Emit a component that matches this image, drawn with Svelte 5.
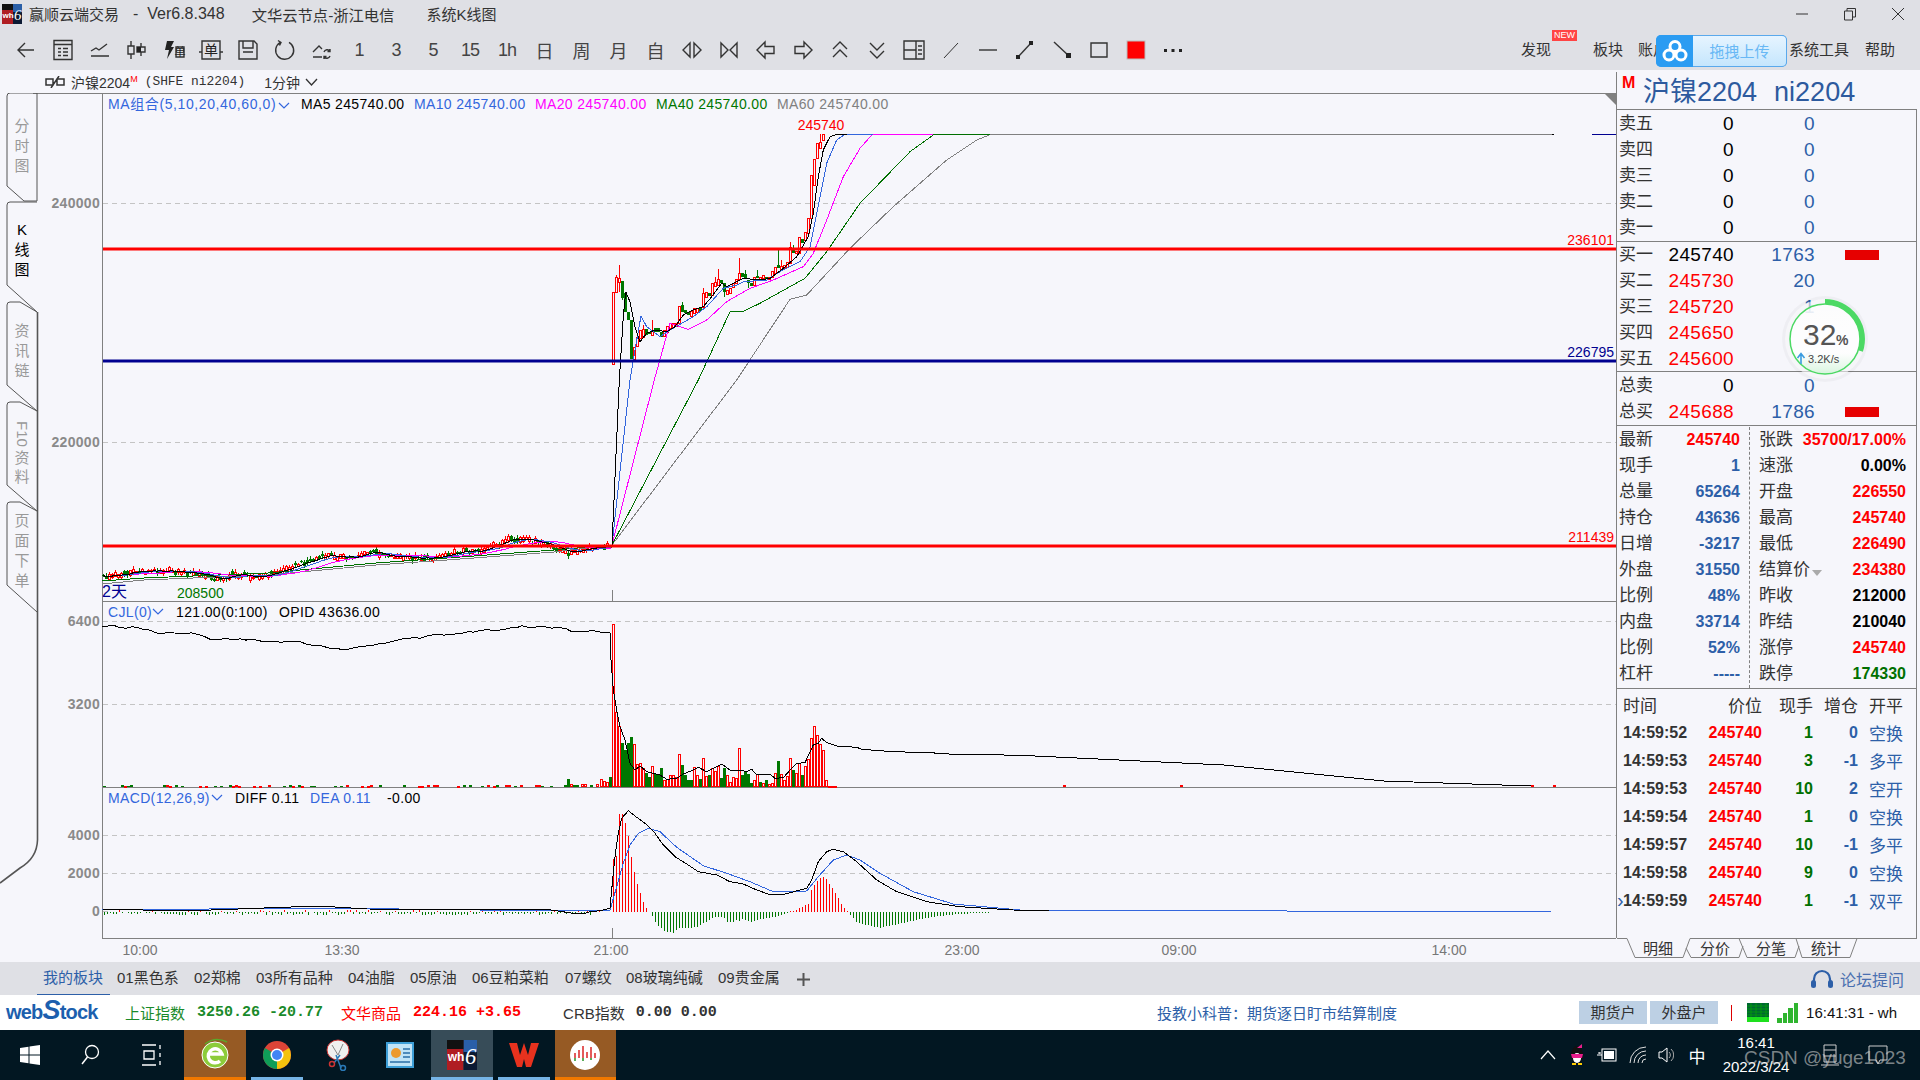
<script>
  // helpers: zoomed crop px -> screen coordinates
  const zx = (p) => 560 + p / 3;
  const zvy = (p) => 600 + p / 3;
  const kvy = (p) => 120 + p / 3;
  const fmt = (pts) => pts.map((p) => p[0].toFixed(1) + ',' + p[1].toFixed(1)).join(' ');
  const noise = (i, s = 1) => {
    const v = Math.sin(i * 12.9898 * s + s * 78.233) * 43758.5453;
    return v - Math.floor(v);
  };
  const lerp = (pts, x) => {
    for (let i = 1; i < pts.length; i++) {
      if (x <= pts[i][0]) {
        const [x0, y0] = pts[i - 1];
        const [x1, y1] = pts[i];
        return y0 + ((y1 - y0) * (x - x0)) / (x1 - x0);
      }
    }
    return pts[pts.length - 1][1];
  };
  const kz = (arr) => arr.map(([a, b]) => [560 + a / 3, kvy(b)]);
  const vz = (arr) => arr.map(([a, b]) => [zx(a), zvy(b)]);
  const wiggle = (pts, amp, s) => {
    const out = [];
    for (let i = 0, x = pts[0][0]; x <= pts[pts.length - 1][0]; i++, x += 6) {
      out.push([x, lerp(pts, x) + (noise(i, s) - 0.5) * amp]);
    }
    return out;
  };

  // ---- K pane ----
  const trend = [[102,577],[133,572],[165,570],[204,575],[219,580],[233,574],[261,577],[276,572],[304,562],[329,555],[347,558],[372,552],[397,557],[429,558],[461,551],[483,550],[508,540],[526,540],[547,545],[569,553],[597,547],[611,545]];
  const leftK = [];
  for (let i = 0, x = 103; x < 611; i++, x += 3) {
    const mid = lerp(trend, x) + (noise(i) - 0.5) * 4;
    const body = 1 + noise(i, 2) * 4;
    leftK.push({
      x,
      top: Math.round(mid - body / 2),
      bot: Math.round(mid + body / 2),
      hi: Math.round(mid - body / 2 - noise(i, 3) * 3),
      lo: Math.round(mid + body / 2 + noise(i, 4) * 3),
      up: noise(i, 5) > 0.42,
      mid
    });
  }
  const sma = (n) => leftK.map((k, i) => {
    const s = leftK.slice(Math.max(0, i - n + 1), i + 1);
    return [k.x, s.reduce((a, b) => a + b.mid, 0) / s.length];
  });
  // r/g body top, bottom, optional high/low (crop px)
  const rawK = 'r515,733 r470,515,465 r475,485,435,515 g483,535,483,540 g520,575 g575,600 g600,716 r680,716 r650,678,640 r630,655 r628,650,615 g628,645 g635,642 r630,645,600 g625,635 g625,637 g635,650 r630,648 r618,635 r610,625 r610,620 r610,618 r558,610 g555,575,545 g570,580 g575,585 r572,588 r565,580 r563,575 g563,573 r518,562,505 r515,530 g518,527 r490,525 r485,498,470 r478,495,448 g480,490 g488,515,488,530 r510,522 r505,518 r488,502 r478,490 r460,478,415 g458,470 g462,475,450 g480,490,480,505 g490,498 r470,495 g468,473,450 r470,478 r465,475 g470,476 r470,478 r452,470 r442,460 g435,445,390 r437,450,420 r435,445 r425,440 r382,430,365 g385,398,375 r392,400 r350,398 g358,370 r335,360 r295,340 r165,295 r118,195 r68,115 r65,85,43 r43,60';
  const rightK = rawK.split(' ').map((s, i) => {
    const [a, b, c, d] = s.slice(1).split(',').map(Number);
    return {
      x: Math.round(zx(160 + i * 9)),
      top: Math.round(kvy(a)),
      bot: Math.round(kvy(b)),
      hi: Math.round(kvy(c ?? a)),
      lo: Math.round(kvy(d ?? b)),
      up: s[0] === 'r'
    };
  });
  const candles = [...leftK, ...rightK];

  const maJoin = { x: 612, y: 545 };
  const ma5 = [...sma(5), [maJoin.x, maJoin.y], ...kz([[178,780],[190,590],[197,515],[210,545],[225,620],[240,665],[260,640],[285,630],[320,635],[345,620],[370,585],[400,570],[430,560],[455,530],[485,490],[500,500],[530,485],[550,475],[600,480],[630,475],[670,445],[710,410],[745,350],[760,280],[775,170],[790,90],[810,50],[830,43],[860,43]])];
  const ma10 = [...sma(10), [maJoin.x, maJoin.y], ...kz([[210,780],[225,690],[243,588],[260,620],[300,650],[330,630],[400,590],[440,560],[490,505],[530,495],[550,485],[620,480],[660,455],[720,425],[750,380],[770,280],[800,130],[830,60],[855,43],[940,43]])];
  const ma20 = [...sma(20), [maJoin.x, maJoin.y], ...kz([[283,780],[330,610],[385,628],[440,600],[500,545],[570,505],[640,480],[730,440],[760,400],[800,300],[850,170],[900,85],[935,45],[945,43],[1120,43]])];
  const ma40 = [[102,581],[144,578],[268,573],[376,563],[447,558],[554,550],[maJoin.x, maJoin.y], ...kz([[415,780],[510,575],[550,574],[600,550],[735,475],[800,395],[900,250],[1050,95],[1120,45],[1135,43],[1290,43]])];
  const ma60 = [[102,584],[144,580],[268,575],[376,565],[447,560],[554,552],[maJoin.x, maJoin.y], ...kz([[530,780],[690,538],[740,525],[870,385],[1000,260],[1160,120],[1250,60],[1290,44]]), [1554,134]];
  const maLines = [
    { pts: ma60, c: '#808080' },
    { pts: ma40, c: '#007000' },
    { pts: ma20, c: '#ff00ff' },
    { pts: ma10, c: '#3366dd' },
    { pts: ma5, c: '#000' }
  ];

  // ---- volume pane ----
  const rawVol = 'g530 r72 r335 r378 g430 g450 g430 g410 r432 r492 r488 r505 g518 g530 r498 g522 g522 g505 r540 r537 r525 r525 r530 r462 g495 g525 g540 g540 r502 r525 g537 r475 r528 g525 r505 r512 r498 g533 g505 r526 r546 r530 r535 r445 g525 g515 g522 g548 r540 r523 g546 r550 g540 r552 r548 r520 g483 r522 r540 r527 r475 g510 r520 r490 g525 r498 r478 r415 r377 r405 r432 r450 r540 r558 r558 r558';
  const vol = [];
  for (let i = 0, x = 104; x < 558; i++, x += 3) {
    if (noise(i, 6) > 0.72) vol.push({ x, top: 787 - (1 + Math.round(noise(i, 7))), up: noise(i, 8) > 0.5 });
  }
  [[15,555,0],[24,537,0],[33,552,1],[42,555,0],[51,555,0],[67,552,1],[76,552,1],[92,555,0],[110,552,1],[124,538,1],[133,543,1],[142,547,1]].forEach(([p, t, u]) => vol.push({ x: Math.round(zx(p)), top: Math.round(zvy(t)), up: !!u }));
  rawVol.split(' ').forEach((s, i) => vol.push({ x: Math.round(zx(150 + i * 9)), top: Math.round(zvy(+s.slice(1))), up: s[0] === 'r' }));
  const blips = [1063, 1180, 1531, 1553];

  const oiLeft = wiggle([[102,626],[135,628],[160,633],[195,632],[205,638],[250,640],[300,642],[340,650],[370,646],[400,640],[430,636],[470,632],[510,628],[525,626],[560,628]], 2.4, 11);
  const oiLine = [...oiLeft,
    ...vz([[20,87],[35,95],[60,95],[100,92],[130,98],[150,98],[153,180],[160,270],[170,330],[180,380],[195,420],[210,490],[225,510],[240,498],[260,515],[300,525],[320,538],[350,535],[370,522],[400,510],[415,502],[440,515],[460,505],[485,492],[510,510],[540,510],[560,515],[575,508],[590,525],[630,523],[645,535],[670,533],[695,505],[710,490],[735,488],[750,455],[760,435],[775,430],[785,415],[800,428],[830,438],[890,442],[905,448],[1000,455],[1110,458],[1180,463],[1280,464],[1380,466]]),
    [1224,765],[1384,781],[1531,786]];

  // ---- MACD pane ----
  const diff = [[102,909],[184,911],[318,906],[367,909],[551,910],
    ...vz([[40,940],[75,940],[90,935],[120,932],[150,925],[157,850],[165,770],[175,700],[185,655],[205,632],[230,652],[255,670],[285,700],[310,735],[345,770],[385,795],[415,815],[470,825],[510,845],[550,852],[590,870],[625,882],[675,882],[740,865],[755,840],[775,785],[800,755],[820,748],[850,755],[890,785],[950,840],[1010,875],[1100,905],[1200,920],[1360,930]]), [1049,911]];
  const dea = [[102,910],[318,908],[560,911],
    ...vz([[150,930],[170,860],[190,790],[210,735],[235,700],[265,685],[300,695],[350,742],[430,797],[500,820],[570,845],[640,875],[740,873],[775,830],[820,780],[860,765],[900,780],[960,820],[1060,875],[1180,912],[1380,930]]), [1551,912]];
  const histTop = [778,768,642,642,670,708,770,815,852,880,905,923,937,948,965,978,985,993,995,996,998,990,985,985,985,985,985,982,980,975,970,965,960,955,950,950,950,955,965,965,965,960,962,958,960,962,965,962,960,958,958,955,955,952,950,948,945,942,938,934,932,930,925,922,915,912,870,855,842,835,830,838,852,865,880,895,912,925,934];
  const hist = [];
  for (let i = 0, x = 104; x < 600; i++, x += 3) {
    const h = noise(i, 9) * 2;
    const up = x > 590 || noise(i, 10) > 0.75;
    hist.push({ x, y1: 912, y2: up ? 912 - h : 912 + h + 1, c: up ? '#f00' : '#070' });
  }
  histTop.forEach((t, i) => {
    const y = zvy(t);
    hist.push({ x: Math.round(zx(160 + i * 9)), y1: 912, y2: y, c: y < 912 ? '#f00' : '#070' });
  });
  const tailPts = [[871,945],[880,955],[889,965],[898,970],[907,973],[960,983],[1000,975],[1060,962],[1120,950],[1200,942],[1300,937],[1360,935]];
  for (let p = 871; p < 1365; p += 9) {
    hist.push({ x: Math.round(zx(p)), y1: 912, y2: zvy(lerp(tailPts, p)), c: '#070' });
  }

  const grid = [203, 442, 621, 704, 835, 873];
  const axis = [['240000', 203], ['220000', 442], ['6400', 621], ['3200', 704], ['4000', 835], ['2000', 873], ['0', 911]];
  const levels = [
    { y: 249, c: '#f00', t: '236101' },
    { y: 361, c: '#000090', t: '226795' },
    { y: 546, c: '#f00', t: '211439' }
  ];
  const times = [['10:00', 140], ['13:30', 342], ['21:00', 611], ['23:00', 962], ['09:00', 1179], ['14:00', 1449]];

  const sideTabs = [
    { d: 'M37 93H10q-3 0-3 3V186L24 201H37V93', lines: [['分', 131], ['时', 151], ['图', 171]] },
    { d: 'M7 285V205q0-3 3-3H37M7 285L37 312', active: true, lines: [['K', 235], ['线', 255], ['图', 275]] },
    { d: 'M37 312L20 302H10q-3 0-3 3V385L37 411', lines: [['资', 336], ['讯', 356], ['链', 376]] },
    { d: 'M37 411L20 402H10q-3 0-3 3V485L37 511', lines: [['资', 463], ['料', 482]], f10: true },
    { d: 'M37 511L20 502H10q-3 0-3 3V585L37 612', lines: [['页', 526], ['面', 546], ['下', 566], ['单', 586]] }
  ];

  // ---- toolbar ----
  const tools = [
    { d: 'M20 12H4M11 5L4 12L11 19' },
    { d: 'M3 2.5H21V21.5H3ZM3 6.5H21M7 10.5H10M12 10.5H17M7 14H10M12 14H17M7 17.5H10M12 17.5H17' },
    { d: 'M3 13L8 10L11 12L19 6M3 18H21' },
    { d: 'M3 8H9V16H3ZM6 3V8M6 16V21M12 9H20V14H12ZM16 5V9M16 14V18', fill: 'M12 9H16V14H12Z' },
    { d: 'M14 9H22V19H14Z', fill: 'M5 3H12L9 9H12L5 21L7 12H3Z', unit: true },
    { d: 'M3 3H21V21H3ZM0 14H3M21 14H24', label: '单' },
    { d: 'M3 3H18L21 6V21H3ZM7 3V10H17V3M7 14H17' },
    { d: 'M16 4.4A9 9 0 1 1 7 4.6M5 2.5L8 4.5L6.5 7.5' },
    { d: 'M3 14L9 8L12 11M3 19H12M14 14A3.5 3.5 0 0 1 20 13M20 18A3.5 3.5 0 0 1 14 19M20 11V13.5H17.5M14 21V18.5H16.5' },
    { t: '1' }, { t: '3' }, { t: '5' }, { t: '15' }, { t: '1h' }, { t: '日' }, { t: '周' }, { t: '月' }, { t: '自' },
    { d: 'M10 5L3 12L10 19ZM14 5L21 12L14 19Z' },
    { d: 'M4 5L11 12L4 19ZM20 5L13 12L20 19Z' },
    { d: 'M11 4L3 12L11 20V15.5H20V8.5H11Z' },
    { d: 'M13 4L21 12L13 20V15.5H4V8.5H13Z' },
    { d: 'M5 11L12 4L19 11M5 19L12 12L19 19' },
    { d: 'M5 5L12 12L19 5M5 13L12 20L19 13' },
    { d: 'M2 3H22V21H2ZM14 3V21M2 12H14M16 8H20M16 12H20M16 16H20' },
    { d: 'M5 20L19 5', thin: true },
    { d: 'M3 12H21' },
    { d: 'M5 19L18 5', fill: 'M3 17H7V21H3ZM16 3H20V7H16Z' },
    { d: 'M4 4L19 18', fill: 'M16 15H21V20H16Z' },
    { d: 'M4 5H20V19H4Z' },
    { square: true },
    { fill: 'M3 11H6V14H3ZM10.5 11H13.5V14H10.5ZM18 11H21V14H18Z' }
  ];

  // ---- quote panel ----
  const sells = ['卖五', '卖四', '卖三', '卖二', '卖一'];
  const buys = [
    ['买一', '245740', '1763', true, 'blk'],
    ['买二', '245730', '20', false, 'red'],
    ['买三', '245720', '1', false, 'red'],
    ['买四', '245650', '1', false, 'red'],
    ['买五', '245600', '1', false, 'red']
  ];
  const statsL = [['最新', '245740', 'red'], ['现手', '1', 'blue'], ['总量', '65264', 'blue'], ['持仓', '43636', 'blue'], ['日增', '-3217', 'blue'], ['外盘', '31550', 'blue'], ['比例', '48%', 'blue'], ['内盘', '33714', 'blue'], ['比例', '52%', 'blue'], ['杠杆', '-----', 'blue']];
  const statsR = [['张跌', '35700/17.00%', 'red'], ['速涨', '0.00%', 'blk'], ['开盘', '226550', 'red'], ['最高', '245740', 'red'], ['最低', '226490', 'red'], ['结算价', '234380', 'red', true], ['昨收', '212000', 'blk'], ['昨结', '210040', 'blk'], ['涨停', '245740', 'red'], ['跌停', '174330', 'grn']];
  const trades = [['14:59:52', '1', '0', '空换'], ['14:59:53', '3', '-1', '多平'], ['14:59:53', '10', '2', '空开'], ['14:59:54', '1', '0', '空换'], ['14:59:57', '10', '-1', '多平'], ['14:59:58', '9', '0', '空换'], ['14:59:59', '1', '-1', '双平']];

  const blocks = [['我的板块', 37, true], ['01黑色系', 117], ['02郑棉', 194], ['03所有品种', 256], ['04油脂', 348], ['05原油', 410], ['06豆粕菜粕', 472], ['07螺纹', 565], ['08玻璃纯碱', 626], ['09贵金属', 718]];
  const signal = [5, 10, 15, 20];
</script>

{#snippet wh6(s)}
  <svg class="wh6" width={s} height={s} viewBox="0 0 20 20">
    <rect width="11" height="20" fill="#b01d22" />
    <rect x="11" width="9" height="20" fill="#0c1a33" />
    <rect x="11" width="9" height="8" fill="#2a5fa8" />
    <rect width="11" height="6" fill="#111" />
    <text x="0.5" y="14" font-size="8" font-weight="700" fill="#fff" font-family="Liberation Sans">wh</text>
    <text x="12" y="16" font-size="15" font-style="italic" fill="#fff" font-family="Liberation Serif">6</text>
  </svg>
{/snippet}

<div class="app">
  <header class="top">
    <div class="titlebar">
      {@render wh6(20)}
      <span class="t-app">赢顺云端交易</span>
      <span class="t-ver">-&nbsp; Ver6.8.348</span>
      <span class="t-node">文华云节点-浙江电信</span>
      <span class="t-view">系统K线图</span>
      <div class="winctl">
        <svg width="14" height="14" viewBox="0 0 14 14"><path d="M1 7H13" /></svg>
        <svg width="14" height="14" viewBox="0 0 14 14"><path d="M1.5 4H9.5V13H1.5ZM4 4V1.5H12.5V10H9.5" /></svg>
        <svg width="14" height="14" viewBox="0 0 14 14"><path d="M1 1L13 13M13 1L1 13" /></svg>
      </div>
    </div>
    <div class="toolbar">
      {#each tools as tool}
        <div class="tool">
          {#if tool.t}
            <span class="tool-t">{tool.t}</span>
          {:else if tool.square}
            <svg width="24" height="24" viewBox="0 0 24 24"><rect x="3" y="3" width="18" height="18" fill="#f00" stroke="#bbb" /></svg>
          {:else}
            <svg width="24" height="24" viewBox="0 0 24 24">
              {#if tool.d}<path d={tool.d} fill="none" stroke="#333" stroke-width={tool.thin ? 1 : 1.4} />{/if}
              {#if tool.fill}<path d={tool.fill} fill="#222" />{/if}
              {#if tool.label}<text x="12" y="17" text-anchor="middle" font-size="14" fill="#222" font-family="Noto Sans CJK SC">{tool.label}</text>{/if}
              {#if tool.unit}<text x="18" y="18" text-anchor="middle" font-size="11" fill="#222" font-family="Noto Sans CJK SC">单</text>{/if}
            </svg>
          {/if}
        </div>
      {/each}
      <nav class="menu">
        <span class="m-find">发现<i class="new">NEW</i></span>
        <span class="m-block">板块</span>
        <span class="m-acct">账户</span>
        <span class="m-sys">系统工具</span>
        <span class="m-help">帮助</span>
      </nav>
    </div>
    <div class="upload">
      <div class="cloud">
        <svg width="26" height="22" viewBox="0 0 26 22">
          <circle cx="13" cy="6.5" r="5" fill="none" stroke="#fff" stroke-width="3" />
          <circle cx="7" cy="15" r="5" fill="none" stroke="#fff" stroke-width="3" />
          <circle cx="19" cy="15" r="5" fill="none" stroke="#fff" stroke-width="3" />
        </svg>
      </div>
      <div class="drag">拖拽上传</div>
    </div>
  </header>

  <main class="main">
    <section class="chart-col">
      <div class="chart-head">
        <svg width="20" height="12" viewBox="0 0 20 12">
          <path d="M1 3H8V9H1ZM12 3H19V9H12ZM6 12L14 0" fill="none" stroke="#333" stroke-width="1.5" />
        </svg>
        <span class="h-name">沪镍2204<sup>M</sup></span>
        <span class="h-code">(SHFE ni2204)</span>
        <span class="h-per">1分钟</span>
        <svg width="13" height="8" viewBox="0 0 13 8"><path d="M1 1L6.5 7L12 1" fill="none" stroke="#333" stroke-width="1.3" /></svg>
      </div>

      <svg class="chart" width="1616" height="869" viewBox="0 93 1616 869">
        <!-- frame -->
        <path d="M33 93.5H1616M102.5 93V938M102 601.5H1616M102 787.5H1616M102 938.5H1616" stroke="#808080" fill="none" />
        <path d="M1605 94H1616V105Z" fill="#808080" />

        <!-- side tabs -->
        <path d="M37.5 312V840Q37 858 20 868L0 883" fill="none" stroke="#555" stroke-width="1.6" />
        {#each sideTabs as tab}
          <path d={tab.d} fill={tab.active ? '#f6f6fb' : 'none'} stroke="#555" />
          {#if tab.f10}
            <text class="side" x="0" y="0" transform="translate(17 421) rotate(90)" fill="#999">F10</text>
          {/if}
          {#each tab.lines as [ch, y]}
            <text class="side" x="22" {y} text-anchor="middle" fill={tab.active ? '#000' : '#999'}>{ch}</text>
          {/each}
        {/each}

        <!-- axes and grid -->
        {#each grid as y}
          <path d="M103 {y + 0.5}H1616" stroke="#c4c4c4" stroke-dasharray="5 4" shape-rendering="crispEdges" />
        {/each}
        <path d="M103 911.5H108" stroke="#c4c4c4" />
        {#each axis as [t, y]}
          <text class="axis" x="100" y={y + 5} text-anchor="end">{t}</text>
        {/each}
        <path d="M612.5 590V601M612.5 928V938" stroke="#808080" shape-rendering="crispEdges" />

        <!-- candles -->
        <g shape-rendering="crispEdges">
          {#each candles as k}
            <path d="M{k.x + 0.5} {k.hi}V{k.lo}" stroke={k.up ? '#f00' : '#070'} />
            {#if k.up}
              <rect x={k.x - 0.5} y={k.top + 0.5} width="2" height={Math.max(1, k.bot - k.top)} fill="#f6f6fb" stroke="#f00" />
            {:else}
              <rect x={k.x - 1} y={k.top} width="3" height={Math.max(1, k.bot - k.top)} fill="#070" />
            {/if}
          {/each}
          {#each maLines as line}
            <polyline points={fmt(line.pts)} fill="none" stroke={line.c} />
          {/each}
          <path d="M1592 134.5H1616" stroke="#000090" />
          <path d="M1552 134.5H1554" stroke="#000" />
        </g>

        <!-- horizontal levels -->
        {#each levels as l}
          <rect x="103" y={l.y - 1.5} width="1513" height="3" fill={l.c} />
          <text class="lbl" x="1614" y={l.y - 4} text-anchor="end" fill={l.c}>{l.t}</text>
        {/each}
        <text class="lbl" x="821" y="130" text-anchor="middle" fill="#f00">245740</text>
        <text class="lbl big" x="102" y="597" fill="#000090">2天</text>
        <text class="lbl" x="177" y="598" fill="#070">208500</text>

        <!-- legends -->
        <text class="lg wide" x="108" y="109" fill="#3366dd">MA组合(5,10,20,40,60,0)</text>
        <path d="M279 103L284 108L289 103" fill="none" stroke="#3366dd" stroke-width="1.2" />
        <text class="lg" x="301" y="109" fill="#000">MA5 245740.00</text>
        <text class="lg" x="414" y="109" fill="#3366dd">MA10 245740.00</text>
        <text class="lg" x="535" y="109" fill="#f0f">MA20 245740.00</text>
        <text class="lg" x="656" y="109" fill="#070">MA40 245740.00</text>
        <text class="lg" x="777" y="109" fill="#808080">MA60 245740.00</text>

        <text class="lg" x="108" y="617" fill="#3366dd">CJL(0)</text>
        <path d="M153 609L158 614L163 609" fill="none" stroke="#3366dd" stroke-width="1.2" />
        <text class="lg" x="176" y="617" fill="#000">121.00(0:100)</text>
        <text class="lg" x="279" y="617" fill="#000">OPID 43636.00</text>

        <text class="lg" x="108" y="803" fill="#3366dd">MACD(12,26,9)</text>
        <path d="M212 795L217 800L222 795" fill="none" stroke="#3366dd" stroke-width="1.2" />
        <text class="lg" x="235" y="803" fill="#000">DIFF 0.11</text>
        <text class="lg" x="310" y="803" fill="#3366dd">DEA 0.11</text>
        <text class="lg" x="387" y="803" fill="#000">-0.00</text>

        <!-- volume -->
        <g shape-rendering="crispEdges">
          {#each vol as v}
            {#if v.up}
              <rect x={v.x - 0.5} y={v.top + 0.5} width="2" height={Math.max(1, 786 - v.top)} fill="#f6f6fb" stroke="#f00" />
            {:else}
              <rect x={v.x - 1} y={v.top} width="3" height={787 - v.top} fill="#070" />
            {/if}
          {/each}
          {#each blips as b}
            <rect x={b} y="785" width="3" height="2" fill="#f00" />
          {/each}
          <polyline points={fmt(oiLine)} fill="none" stroke="#000" />
          <!-- macd -->
          {#each hist as h}
            <path d="M{h.x + 0.5} {h.y1}V{h.y2}" stroke={h.c} />
          {/each}
          <polyline points={fmt(dea)} fill="none" stroke="#3366dd" />
          <polyline points={fmt(diff)} fill="none" stroke="#000" />
        </g>

        {#each times as [t, x]}
          <text class="time" {x} y="955" text-anchor="middle">{t}</text>
        {/each}
      </svg>
    </section>

    <aside class="quote">
      <div class="q-title">
        <b class="q-m">M</b>
        <span class="q-name">沪镍2204</span>
        <span class="q-code">ni2204</span>
      </div>
      <div class="q-body">
        <div class="book b-sell">
          {#each sells as s}
            <div class="book-row"><span class="lab">{s}</span><span class="n blk">0</span><span class="n blue">0</span></div>
          {/each}
        </div>
        <div class="book b-buy">
          {#each buys as b}
            <div class="book-row">
              <span class="lab">{b[0]}</span><span class="n {b[4]}">{b[1]}</span><span class="n blue">{b[2]}</span>
              {#if b[3]}<i class="bar"></i>{/if}
            </div>
          {/each}
        </div>
        <div class="book b-total">
          <div class="book-row"><span class="lab">总卖</span><span class="n blk">0</span><span class="n blue">0</span></div>
          <div class="book-row"><span class="lab">总买</span><span class="n red">245688</span><span class="n blue">1786</span><i class="bar"></i></div>
        </div>
        <div class="stats">
          <div class="s-col s-left">
            {#each statsL as s}
              <div class="s-row"><span class="lab">{s[0]}</span><b class={s[2]}>{s[1]}</b></div>
            {/each}
          </div>
          <div class="s-col s-right">
            {#each statsR as s}
              <div class="s-row">
                <span class="lab">{s[0]}{#if s[3]}<i class="caret"></i>{/if}</span><b class={s[2]}>{s[1]}</b>
              </div>
            {/each}
          </div>
        </div>
        <div class="trades">
          <div class="tr-row tr-head"><span>时间</span><span class="r">价位</span><span class="r">现手</span><span class="r">增仓</span><span>开平</span></div>
          {#each trades as t, i}
            <div class="tr-row">
              {#if i === trades.length - 1}<i class="cur">›</i>{/if}
              <b class="tm">{t[0]}</b><b class="r red">245740</b><b class="r grn">{t[1]}</b><b class="r blue">{t[2]}</b><span class="kp">{t[3]}</span>
            </div>
          {/each}
        </div>
      </div>
      <svg class="q-tabs" width="304" height="24" viewBox="1616 938 304 24">
        <path d="M1617 938.5H1627L1635 957.5H1683L1690 938.5H1917" fill="none" stroke="#808080" />
        <path d="M1686 948L1691 957.5H1739L1743 946M1739 938.5L1747 957.5H1795L1799 946M1796 938.5L1802 957.5H1850L1857 938.5" fill="none" stroke="#808080" />
        <text x="1658" y="954" text-anchor="middle">明细</text>
        <text x="1715" y="954" text-anchor="middle">分价</text>
        <text x="1771" y="954" text-anchor="middle">分笔</text>
        <text x="1826" y="954" text-anchor="middle">统计</text>
      </svg>

      <svg class="net" width="88" height="88" viewBox="0 0 88 88">
        <defs>
          <linearGradient id="ringfill" x1="0" y1="0" x2="0" y2="1">
            <stop offset="0" stop-color="#fff" stop-opacity=".7" />
            <stop offset="0.7" stop-color="#fff" stop-opacity=".85" />
            <stop offset="1" stop-color="#d8f5de" />
          </linearGradient>
        </defs>
        <circle cx="44" cy="44" r="43" fill="#000" opacity=".03" />
        <circle cx="44" cy="44" r="40" fill="#fbfbfd" opacity=".6" />
        <circle cx="44" cy="44" r="35" fill="url(#ringfill)" stroke="#4cd964" stroke-width="1.5" />
        <path d="M44 6.5A37.5 37.5 0 0 1 79.5 56" fill="none" stroke="#4cd964" stroke-width="5" />
        <text x="22" y="50" font-size="30" fill="#555" font-family="Liberation Sans">32</text>
        <text x="55" y="50" font-size="14" font-weight="700" fill="#555" font-family="Liberation Sans">%</text>
        <path d="M20 69V59M16.5 63L20 58.5L23.5 63" fill="none" stroke="#3a9be0" stroke-width="1.6" />
        <text x="27" y="68" font-size="11" fill="#444" font-family="Liberation Sans">3.2K/s</text>
      </svg>
    </aside>
  </main>

  <div class="blocks">
    {#each blocks as b}
      <span class="block" class:on={b[2]} style="left:{b[1]}px">{b[0]}</span>
    {/each}
    <svg class="plus" width="13" height="13" viewBox="0 0 13 13"><path d="M6.5 0V13M0 6.5H13" stroke="#555" stroke-width="2" /></svg>
    <div class="forum">
      <svg width="24" height="20" viewBox="0 0 24 20">
        <path d="M4 13V10A8 8 0 0 1 20 10V13" fill="none" stroke="#2d5fa8" stroke-width="2.2" />
        <rect x="1" y="11" width="5" height="8" rx="2.5" fill="#2d5fa8" />
        <rect x="18" y="11" width="5" height="8" rx="2.5" fill="#2d5fa8" />
      </svg>
      <span>论坛提问</span>
    </div>
  </div>

  <div class="status">
    <div class="wslogo"><span>web</span><em>S</em><span>tock</span></div>
    <span class="st-lab grn2" style="margin-left:35px">上证指数</span>
    <b class="st-num grn2" style="margin-left:12px">3250.26 -20.77</b>
    <span class="st-lab redc" style="margin-left:18px">文华商品</span>
    <b class="st-num redc" style="margin-left:12px">224.16 +3.65</b>
    <span class="st-lab" style="margin-left:42px">CRB指数</span>
    <b class="st-num" style="margin-left:11px">0.00 0.00</b>
    <span class="news">投教小科普：期货逐日盯市结算制度</span>
    <div class="st-right">
      <span class="st-btn">期货户</span>
      <span class="st-btn">外盘户</span>
      <i class="st-sep"></i>
      <svg width="22" height="19" viewBox="0 0 22 19">
        <rect width="22" height="19" fill="#063" />
        <path d="M0 3H22M0 6H22M0 9H22M0 12H22M4 0V14M9 0V14M14 0V14M19 0V14" stroke="#0a0" stroke-width=".7" />
        <rect y="14" width="22" height="5" fill="#1ee01e" />
      </svg>
      <div class="sig">
        {#each signal as h}<i style="height:{h}px"></i>{/each}
      </div>
      <span class="clock">16:41:31 - wh</span>
    </div>
  </div>

  <footer class="taskbar">
    <div class="sys s60">
      <svg width="20" height="20" viewBox="0 0 20 20"><path d="M0 3L8.5 1.8V9.5H0ZM9.5 1.6L20 0V9.5H9.5ZM0 10.5H8.5V18.2L0 17ZM9.5 10.5H20V20L9.5 18.4Z" fill="#fff" /></svg>
    </div>
    <div class="sys s60">
      <svg width="20" height="22" viewBox="0 0 20 22"><circle cx="12" cy="8" r="6.5" fill="none" stroke="#fff" stroke-width="1.3" /><path d="M7.5 13L2 20" stroke="#fff" stroke-width="1.5" /></svg>
    </div>
    <div class="sys s64">
      <svg width="20" height="22" viewBox="0 0 20 22"><path d="M0 1H14M0 21H14M2 7H12V15H2ZM18 1V5M18 9V13M18 17V21" fill="none" stroke="#fff" stroke-width="1.3" /></svg>
    </div>
    <div class="tile hot">
      <svg width="30" height="34" viewBox="0 0 30 34"><circle cx="15" cy="17" r="13" fill="#8ccc3a" stroke="#fff" stroke-width="1" /><path d="M8 16H22A7 7 0 1 0 20 23" fill="none" stroke="#fff" stroke-width="3.5" /><path d="M5 6Q15-2 27 4" fill="none" stroke="#5ba82a" stroke-width="1.5" /></svg>
    </div>
    <div class="tile run">
      <svg width="28" height="28" viewBox="0 0 28 28">
        <circle cx="14" cy="14" r="14" fill="#db4437" />
        <path d="M14 14L26.1 7A14 14 0 0 1 14 28Z" fill="#f4c20d" />
        <path d="M14 14L14 28A14 14 0 0 1 1.9 7Z" fill="#0f9d58" />
        <circle cx="14" cy="14" r="6.5" fill="#fff" /><circle cx="14" cy="14" r="5" fill="#4285f4" />
      </svg>
    </div>
    <div class="tile">
      <svg width="28" height="32" viewBox="0 0 28 32"><ellipse cx="14" cy="11" rx="11" ry="10" fill="#f0f0f0" stroke="#c33" /><path d="M8 6L14 16L19 5" stroke="#888" fill="none" /><path d="M12 16L17 29M16 16L10 24" stroke="#2a7ab8" stroke-width="1.5" /><circle cx="8" cy="25" r="2.5" fill="none" stroke="#c33" stroke-width="1.5" /><circle cx="19" cy="29" r="2.5" fill="none" stroke="#2a7ab8" stroke-width="1.5" /></svg>
    </div>
    <div class="tile">
      <svg width="28" height="26" viewBox="0 0 28 26"><rect width="28" height="26" fill="#3d9fd8" /><rect x="2" y="2" width="24" height="22" fill="#bfe3f7" /><circle cx="10" cy="11" r="5" fill="#ec9a2f" /><path d="M17 7H24M17 11H24M17 15H24M4 20H24" stroke="#2a6fa8" stroke-width="1.6" /></svg>
    </div>
    <div class="tile active run">{@render wh6(30)}</div>
    <div class="tile run">
      <svg width="30" height="28" viewBox="0 0 30 28"><path d="M0 2H8L11 14L15 2L19 14L22 2H30L22 26H17L15 18L13 26H8Z" fill="#e8321e" /></svg>
    </div>
    <div class="tile hot">
      <svg width="32" height="32" viewBox="0 0 32 32"><circle cx="16" cy="16" r="15" fill="#fff" /><path d="M6 19V14M10 19V11M14 19V7M18 19V13M22 19V8M26 19V14" stroke="#d33" stroke-width="1.6" /><path d="M6 19V22M14 19V22M22 19V21" stroke="#393" stroke-width="1.6" /></svg>
    </div>
    <div class="tray">
      <div class="c" style="width:30px"><svg width="16" height="10" viewBox="0 0 16 10"><path d="M1 9L8 1L15 9" fill="none" stroke="#fff" stroke-width="1.2" /></svg></div>
      <div class="c" style="width:28px">
        <svg width="16" height="22" viewBox="0 0 16 22"><ellipse cx="8" cy="11" rx="6" ry="9" fill="#111" /><ellipse cx="8" cy="14" rx="4" ry="5" fill="#fff" /><path d="M2 10H14L13 14H3Z" fill="#e91e8c" /><path d="M8 4L13 0V4Z" fill="#e91e8c" /><path d="M3 20H7M9 20H13" stroke="#fc0" stroke-width="2" /></svg>
      </div>
      <div class="c" style="width:32px"><svg width="20" height="14" viewBox="0 0 20 14"><rect x="5" y="1" width="14" height="12" fill="none" stroke="#fff" /><rect x="7" y="3" width="10" height="8" fill="#fff" /><path d="M0 7H5M2 4V6M3 4V6" stroke="#fff" /></svg></div>
      <div class="c" style="width:29px"><svg width="18" height="18" viewBox="0 0 18 18"><path d="M1 17A16 16 0 0 1 17 1M5 17A12 12 0 0 1 17 5M9 17A8 8 0 0 1 17 9M13 17A4 4 0 0 1 17 13" fill="none" stroke="#ddd" stroke-width="1" /></svg></div>
      <div class="c" style="width:28px"><svg width="16" height="18" viewBox="0 0 16 18"><path d="M1 6H4L9 2V16L4 12H1Z" fill="none" stroke="#fff" /><path d="M11 6A4 4 0 0 1 11 12M13 3A8 8 0 0 1 13 15" fill="none" stroke="#aaa" /></svg></div>
      <div class="c ime" style="width:34px">中</div>
      <div class="c clock2" style="width:84px"><span>16:41</span><span>2022/3/24</span></div>
      <div class="c" style="width:64px"><svg width="18" height="22" viewBox="0 0 18 22"><path d="M3 1H15V18H3ZM3 6H15M3 12H15M0 21H18" fill="none" stroke="#ccc" /></svg></div>
      <div class="c" style="width:32px"><svg width="20" height="20" viewBox="0 0 20 20"><path d="M1 1H19V15H12L10 19L8 15H1Z" fill="none" stroke="#ccc" /></svg></div>
    </div>
    <span class="mark">CSDN @yuge1023</span>
  </footer>
</div>

<style>
  :global(body) {
    margin: 0;
    background: #f6f6fb;
    overflow: hidden;
  }
  .app {
    position: relative;
    width: 1920px;
    height: 1080px;
    overflow: hidden;
    font-family: "Liberation Sans", "Noto Sans CJK SC", sans-serif;
    color: #333;
    background: #f6f6fb;
  }

  /* top */
  .top {
    position: relative;
    height: 70px;
    background: #dfe0e5;
  }
  .titlebar {
    display: flex;
    align-items: center;
    height: 27px;
    padding-left: 2px;
    font-size: 15px;
    color: #333;
  }
  .wh6 {
    display: block;
    flex: none;
  }
  .t-app { margin-left: 7px; }
  .t-ver { margin-left: 14px; font-size: 16px; }
  .t-node { margin-left: 27px; font-size: 15.3px; }
  .t-view { margin-left: 32px; }
  .winctl {
    display: flex;
    gap: 34px;
    margin-left: auto;
    margin-right: 15px;
  }
  .winctl path {
    fill: none;
    stroke: #333;
  }
  .toolbar {
    display: flex;
    align-items: center;
    height: 43px;
    padding-left: 7.5px;
  }
  .tool {
    box-sizing: border-box;
    display: flex;
    align-items: center;
    justify-content: center;
    flex: none;
    width: 37px;
    height: 43px;
    padding-top: 3px;
  }
  .tool svg { display: block; }
  .tool-t {
    font-size: 18px;
    color: #444;
    letter-spacing: -1px;
  }
  .menu {
    display: flex;
    margin-left: auto;
    padding-right: 25px;
    font-size: 15px;
    color: #333;
    white-space: nowrap;
  }
  .m-find { position: relative; }
  .new {
    position: absolute;
    left: 31px;
    top: -8px;
    padding: 0 2px;
    height: 11px;
    line-height: 11px;
    font-size: 9px;
    font-style: normal;
    color: #fff;
    background: #f44;
  }
  .m-block { margin-left: 42px; }
  .m-acct { margin-left: 15px; }
  .m-sys { margin-left: 121px; }
  .m-help { margin-left: 16px; }
  .upload {
    position: absolute;
    left: 1656px;
    top: 35px;
    display: flex;
    width: 131px;
    height: 32px;
    border-radius: 5px;
    overflow: hidden;
    box-shadow: inset 0 0 0 1px #5aa9ec;
  }
  .cloud {
    display: flex;
    align-items: center;
    justify-content: center;
    width: 37px;
    background: #2b9cf2;
  }
  .drag {
    flex: 1;
    text-align: center;
    line-height: 32px;
    font-size: 15px;
    color: #68b8f5;
    background: linear-gradient(#e6f4ff, #c5e6fd);
    border: 1px solid #5aa9ec;
    border-left: 0;
    border-radius: 0 5px 5px 0;
    box-sizing: border-box;
  }

  /* main */
  .main {
    display: flex;
    height: 892px;
  }
  .chart-col {
    width: 1616px;
    flex: none;
  }
  .chart-head {
    display: flex;
    align-items: center;
    height: 23px;
    padding-left: 45px;
    font-size: 14px;
    color: #333;
  }
  .h-name {
    margin-left: 6px;
    font-size: 14px;
  }
  .h-name sup {
    font-size: 9px;
    color: #f00;
    line-height: 0;
  }
  .h-code {
    margin-left: 7px;
    font-family: "Liberation Mono", monospace;
    font-size: 12.9px;
  }
  .h-per { margin-left: 19px; }
  .chart-head svg:last-child { margin-left: 5px; }
  .chart {
    display: block;
    font-family: "Liberation Sans", "Noto Sans CJK SC", sans-serif;
  }
  .side { font-size: 15px; }
  .axis {
    font-size: 14px;
    font-weight: 700;
    letter-spacing: .3px;
    fill: #8a8a8a;
  }
  .lbl { font-size: 14px; }
  .big { font-size: 16px; }
  .lg {
    font-size: 14px;
    letter-spacing: .35px;
  }
  .lg.wide { letter-spacing: .6px; }
  .time {
    font-size: 14px;
    fill: #777;
  }

  /* quote */
  .quote {
    position: relative;
    width: 304px;
    flex: none;
  }
  .q-title {
    position: relative;
    display: flex;
    align-items: baseline;
    height: 37px;
    margin-top: 2px;
    padding-left: 26px;
    border-left: 1px solid #808080;
    font-size: 27px;
    line-height: 40px;
    color: #2d5a9e;
  }
  .q-m {
    position: absolute;
    left: 5px;
    top: 1px;
    font-size: 16px;
    line-height: 20px;
    color: #f00;
  }
  .q-code { margin-left: 17px; }
  .q-body {
    box-sizing: border-box;
    width: 301px;
    border: 1px solid #808080;
    border-bottom: 0;
  }
  .book {
    box-sizing: border-box;
    border-bottom: 1px solid #808080;
  }
  .b-sell {
    height: 132px;
    padding-top: 1px;
  }
  .b-buy { height: 130px; }
  .b-total {
    height: 54px;
    padding-top: 1px;
  }
  .book-row {
    display: grid;
    grid-template-columns: 48px 67px 81px auto;
    align-items: center;
    height: 26px;
    padding-left: 2px;
  }
  .lab {
    font-size: 17px;
    line-height: 26px;
    color: #333;
    white-space: nowrap;
  }
  .n {
    font-size: 19px;
    line-height: 26px;
    letter-spacing: .35px;
    text-align: right;
  }
  .bar {
    width: 34px;
    height: 10px;
    margin-left: 30px;
    background: #e60000;
  }
  .blk { color: #000; }
  .red { color: #f00; }
  .blue { color: #2d5fa8; }
  .grn { color: #007000; }
  .stats {
    box-sizing: border-box;
    display: grid;
    grid-template-columns: 133px 1fr;
    height: 263px;
    padding-top: 1px;
    border-bottom: 1px solid #808080;
  }
  .s-col { height: 261px; }
  .s-left {
    box-sizing: border-box;
    padding: 0 9px 0 2px;
    border-right: 1px dashed #808080;
  }
  .s-right { padding: 0 10px 0 9px; }
  .s-row {
    display: flex;
    justify-content: space-between;
    align-items: center;
    height: 26px;
  }
  .s-row b {
    font-size: 16px;
    white-space: nowrap;
  }
  .caret {
    display: inline-block;
    margin-left: 2px;
    vertical-align: -1px;
    border: 5.5px solid transparent;
    border-top: 6px solid #aaa;
    border-bottom: 0;
  }
  .trades {
    box-sizing: border-box;
    height: 249px;
    padding: 0 0 0 6px;
  }
  .tr-row {
    position: relative;
    display: grid;
    grid-template-columns: 65px 74px 51px 45px auto;
    align-items: center;
    height: 28px;
    font-size: 16px;
  }
  .tr-row .kp,
  .tr-head span {
    font-size: 17px;
    white-space: nowrap;
  }
  .tr-head {
    height: 30px;
    padding-top: 1px;
    box-sizing: border-box;
  }
  .tr-head span { color: #333; }
  .kp {
    margin-left: 11px;
    margin-top: -2px;
    color: #2d5fa8;
  }
  .tr-head span:last-child { margin-left: 11px; }
  .r {
    text-align: right;
    white-space: nowrap;
  }
  .tm { color: #333; }
  .cur {
    position: absolute;
    left: -6px;
    top: 1px;
    font-style: normal;
    font-size: 20px;
    line-height: 24px;
    color: #2d5fa8;
  }
  .q-tabs {
    display: block;
    font-size: 15px;
    fill: #333;
  }
  .net {
    position: absolute;
    left: 165px;
    top: 225px;
  }

  /* blocks */
  .blocks {
    position: relative;
    height: 33px;
    background: #dfe0e5;
    font-size: 15px;
  }
  .block {
    position: absolute;
    top: 0;
    line-height: 32px;
    color: #333;
    white-space: nowrap;
  }
  .block.on {
    color: #2d5fa8;
    height: 32px;
    padding: 0 7px 0 6px;
    border-bottom: 1px solid #2d5fa8;
  }
  .plus {
    position: absolute;
    left: 797px;
    top: 11px;
  }
  .forum {
    display: flex;
    align-items: center;
    justify-content: flex-end;
    gap: 6px;
    height: 33px;
    padding-right: 16px;
    font-size: 16px;
    color: #4a6fb0;
  }

  /* status */
  .status {
    display: flex;
    align-items: center;
    height: 35px;
    background: #fff;
    font-size: 15px;
    white-space: nowrap;
  }
  .wslogo {
    display: flex;
    align-items: center;
    width: 84px;
    margin-left: 6px;
    font-size: 20px;
    font-weight: 700;
    letter-spacing: -.8px;
    color: #1c5fae;
  }
  .wslogo em {
    font-size: 27px;
    line-height: 20px;
    margin-top: -6px;
  }
  .st-lab { font-size: 15px; }
  .st-num {
    font-family: "Liberation Mono", monospace;
    font-size: 15px;
  }
  .grn2 { color: #1a8a2a; }
  .redc { color: #f00; }
  .news {
    position: absolute;
    left: 1157px;
    color: #2d5fa8;
  }
  .st-right {
    display: flex;
    align-items: center;
    margin-left: auto;
    padding-right: 23px;
  }
  .st-btn {
    width: 68px;
    height: 23px;
    margin-right: 3px;
    line-height: 23px;
    text-align: center;
    background: #bdd0e4;
  }
  .st-sep {
    width: 1px;
    height: 16px;
    margin: 0 15px 0 10px;
    background: #d00;
  }
  .sig {
    display: flex;
    align-items: flex-end;
    gap: 1px;
    height: 20px;
    margin-left: 8px;
  }
  .sig i {
    width: 4.5px;
    background: #2fb52f;
  }
  .clock {
    margin-left: 8px;
    color: #111;
  }

  /* taskbar */
  .taskbar {
    position: relative;
    display: flex;
    height: 50px;
    background: #021722;
  }
  .sys,
  .tile,
  .c {
    display: flex;
    align-items: center;
    justify-content: center;
    flex: none;
    height: 50px;
  }
  .s60 { width: 60px; }
  .s64 { width: 64px; }
  .tile {
    position: relative;
    box-sizing: border-box;
    width: 61.75px;
  }
  .tile.hot { background: #965a24; }
  .tile.active { background: #374c58; }
  .tile.run::after,
  .tile.hot::after {
    content: "";
    position: absolute;
    left: 5px;
    right: 5px;
    bottom: 0;
    height: 3px;
    background: #75b4e6;
  }
  .tile.active::after {
    left: 0;
    right: 0;
  }
  .tile.hot::after {
    left: 0;
    right: 0;
    background: #f07800;
  }
  .tray {
    display: flex;
    margin-left: auto;
    padding-right: 26px;
    color: #fff;
  }
  .ime { font-size: 17px; }
  .clock2 {
    flex-direction: column;
    gap: 6px;
    font-size: 15px;
    line-height: 18px;
  }
  .mark {
    position: absolute;
    left: 1744px;
    top: 16px;
    font-size: 19px;
    line-height: 24px;
    color: rgba(205, 205, 205, .6);
    white-space: nowrap;
  }
</style>
